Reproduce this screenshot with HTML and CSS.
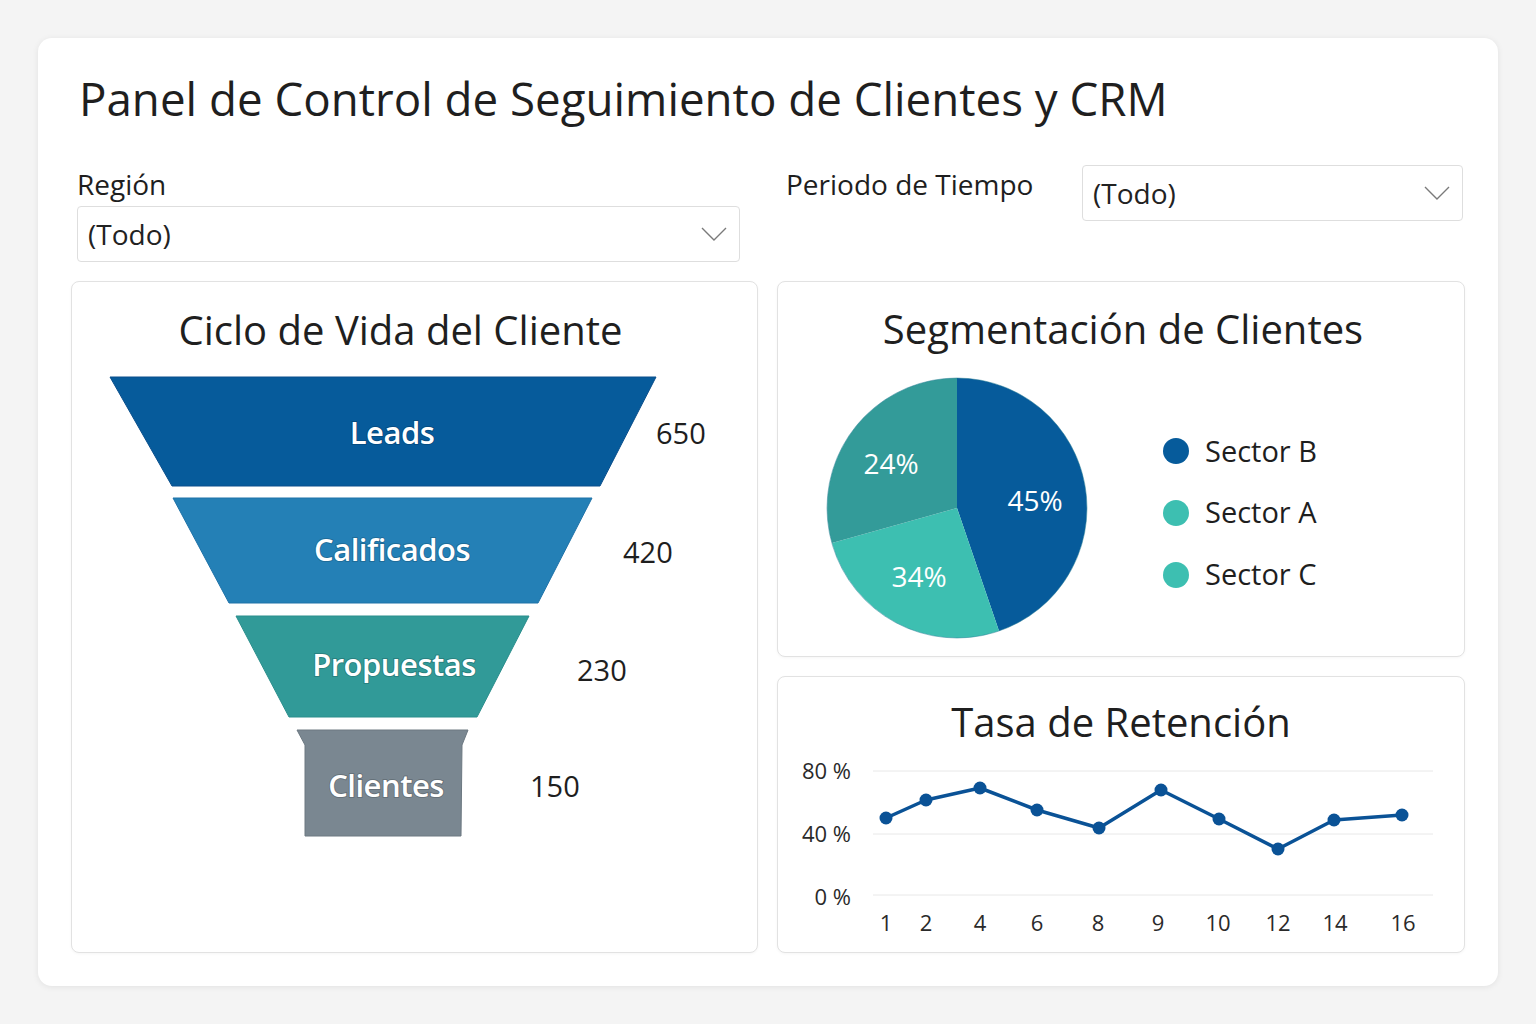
FILE: index.html
```html
<!DOCTYPE html>
<html lang="es">
<head>
<meta charset="utf-8">
<title>Panel de Control de Seguimiento de Clientes y CRM</title>
<link rel="stylesheet" href="styles.css">
</head>
<body>
<main class="dashboard">
  <h1 class="page-title">Panel de Control de Seguimiento de Clientes y CRM</h1>

  <section class="filters">
    <div class="filter filter-region">
      <label class="filter-label">Región</label>
      <div class="select select-wide">
        <span class="select-value">(Todo)</span>
        <svg class="chevron" viewBox="0 0 26 14" width="26" height="14"><path d="M1 1 L13 13 L25 1" fill="none" stroke="#7a7a7a" stroke-width="1.4"/></svg>
      </div>
    </div>
    <div class="filter filter-period">
      <label class="filter-label">Periodo de Tiempo</label>
      <div class="select select-narrow">
        <span class="select-value">(Todo)</span>
        <svg class="chevron" viewBox="0 0 26 14" width="26" height="14"><path d="M1 1 L13 13 L25 1" fill="none" stroke="#7a7a7a" stroke-width="1.4"/></svg>
      </div>
    </div>
  </section>

  <section class="cards">
    <article class="card card-funnel">
      <h2 class="card-title funnel-title">Ciclo de Vida del Cliente</h2>
      <svg class="funnel-svg" viewBox="72 370 685 560" width="685" height="560">
        <path d="M110,377 L656,377 L600,486 L172,486 Z" fill="#065b9b" stroke="#0a4f8c" stroke-width="1"/>
        <path d="M173,498 L592,498 L538,603 L229,603 Z" fill="#2480b6" stroke="#1f72a8" stroke-width="1"/>
        <path d="M236,616 L529,616 L477,717 L289,717 Z" fill="#319a98" stroke="#2b8e8c" stroke-width="1"/>
        <path d="M297,730 L468,730 L462,745 L461,836 L305,836 L305,745 Z" fill="#7a8791" stroke="#6c7881" stroke-width="1"/>
        <text class="funnel-label" x="392" y="432">Leads</text>
        <text class="funnel-label" x="392" y="549">Calificados</text>
        <text class="funnel-label" x="394" y="664">Propuestas</text>
        <text class="funnel-label" x="386" y="785">Clientes</text>
        <text class="funnel-value" x="656" y="432">650</text>
        <text class="funnel-value" x="623" y="551">420</text>
        <text class="funnel-value" x="577" y="669">230</text>
        <text class="funnel-value" x="530" y="785">150</text>
      </svg>
    </article>

    <div class="right-col">
      <article class="card card-pie">
        <h2 class="card-title pie-title">Segmentación de Clientes</h2>
        <svg class="pie-svg" viewBox="778 362 686 290" width="686" height="290">
          <path d="M957,507 L957,377 A130,130 0 0 1 999,630 Z" fill="#065b9b"/>
          <path d="M957,507 L999,630 A130,130 0 0 1 832,542 Z" fill="#3dbfb1"/>
          <path d="M957,507 L832,542 A130,130 0 0 1 957,377 Z" fill="#339b99"/>
          <circle cx="957" cy="507" r="130" fill="none" stroke="#2a7f95" stroke-width="1" opacity="0.5"/>
          <text class="pie-pct" x="1035" y="499">45%</text>
          <text class="pie-pct" x="891" y="462">24%</text>
          <text class="pie-pct" x="919" y="575">34%</text>
          <circle cx="1176" cy="450" r="13" fill="#065b9b"/>
          <circle cx="1176" cy="512" r="13" fill="#3dbfb1"/>
          <circle cx="1176" cy="574" r="13" fill="#3dbfb1"/>
          <text class="legend-text" x="1205" y="449">Sector B</text>
          <text class="legend-text" x="1205" y="510">Sector A</text>
          <text class="legend-text" x="1205" y="572">Sector C</text>
        </svg>
      </article>

      <article class="card card-line">
        <h2 class="card-title line-title">Tasa de Retención</h2>
        <svg class="line-svg" viewBox="778 750 686 200" width="686" height="200">
          <line x1="873" y1="771" x2="1433" y2="771" class="grid"/>
          <line x1="873" y1="834" x2="1433" y2="834" class="grid"/>
          <line x1="873" y1="895" x2="1433" y2="895" class="grid"/>
          <text class="axis-y" x="851" y="770">80 %</text>
          <text class="axis-y" x="851" y="833">40 %</text>
          <text class="axis-y" x="851" y="896">0 %</text>
          <text class="axis-x" x="886" y="922">1</text>
          <text class="axis-x" x="926" y="922">2</text>
          <text class="axis-x" x="980" y="922">4</text>
          <text class="axis-x" x="1037" y="922">6</text>
          <text class="axis-x" x="1098" y="922">8</text>
          <text class="axis-x" x="1158" y="922">9</text>
          <text class="axis-x" x="1218" y="922">10</text>
          <text class="axis-x" x="1278" y="922">12</text>
          <text class="axis-x" x="1335" y="922">14</text>
          <text class="axis-x" x="1403" y="922">16</text>
          <polyline class="series" points="886,818 926,800 980,788 1037,810 1099,828 1161,790 1219,819 1278,849 1334,820 1402,815"/>
          <g class="markers">
            <circle cx="886" cy="818" r="6.5"/>
            <circle cx="926" cy="800" r="6.5"/>
            <circle cx="980" cy="788" r="6.5"/>
            <circle cx="1037" cy="810" r="6.5"/>
            <circle cx="1099" cy="828" r="6.5"/>
            <circle cx="1161" cy="790" r="6.5"/>
            <circle cx="1219" cy="819" r="6.5"/>
            <circle cx="1278" cy="849" r="6.5"/>
            <circle cx="1334" cy="820" r="6.5"/>
            <circle cx="1402" cy="815" r="6.5"/>
          </g>
        </svg>
      </article>
    </div>
  </section>
</main>
</body>
</html>
```

FILE: styles.css
```css
* { box-sizing: border-box; }

html, body {
  margin: 0;
  padding: 0;
}

body {
  background: #f4f4f4;
  font-family: "Open Sans", "Noto Sans", "Liberation Sans", sans-serif;
  color: #222;
  width: 1536px;
  height: 1024px;
  overflow: hidden;
}

.dashboard {
  margin: 38px 0 0 38px;
  width: 1460px;
  height: 948px;
  background: #fff;
  border-radius: 14px;
  box-shadow: 0 1px 6px rgba(0, 0, 0, 0.08);
  padding: 30px 33px 33px 33px;
}

.page-title {
  margin: 0 0 0 8px;
  font-size: 45.7px;
  font-weight: 500;
  line-height: 60px;
  color: #1f1f1f;
  letter-spacing: 0;
}

.filters {
  display: flex;
  margin-top: 41px;
  margin-bottom: 19px;
  padding-left: 6px;
  height: 93px;
}

.filter-region {
  width: 663px;
  display: flex;
  flex-direction: column;
}

.filter-period {
  margin-left: 46px;
  display: flex;
  align-items: flex-start;
}

.filter-label {
  font-size: 28px;
  font-weight: 500;
  line-height: 30px;
  color: #1e1e1e;
}

.filter-period .filter-label {
  width: 296px;
}

.select {
  height: 56px;
  border: 1px solid #dedede;
  border-radius: 4px;
  background: #fff;
  display: flex;
  align-items: center;
  justify-content: space-between;
  padding: 0 12px 0 10px;
}

.select-wide {
  margin-top: 7px;
  width: 663px;
}

.select-narrow {
  margin-top: -4px;
  width: 381px;
}

.select-value {
  font-size: 28px;
  color: #222;
  line-height: 1;
}

.chevron {
  display: block;
}

.cards {
  display: flex;
  gap: 19px;
}

.card {
  background: #fff;
  border: 1px solid #e2e2e2;
  border-radius: 8px;
  box-shadow: 0 1px 3px rgba(0, 0, 0, 0.04);
}

.card-funnel {
  width: 687px;
  height: 672px;
}

.right-col {
  width: 688px;
  display: flex;
  flex-direction: column;
  gap: 19px;
}

.card-pie {
  height: 376px;
}

.card-line {
  height: 277px;
}

.card-title {
  margin: 0;
  text-align: center;
  font-size: 40px;
  font-weight: 500;
  line-height: 50px;
  color: #1f1f1f;
}

.funnel-title {
  margin-top: 23px;
  margin-bottom: 15px;
  padding-right: 28px;
}

.pie-title {
  margin-top: 22px;
  margin-bottom: 9px;
  padding-left: 4px;
}

.line-title {
  margin-top: 20px;
  margin-bottom: 3px;
}

svg { display: block; }

.funnel-label {
  font-family: "Open Sans", "Noto Sans", sans-serif;
  font-size: 31px;
  font-weight: 600;
  fill: #ffffff;
  text-anchor: middle;
  dominant-baseline: central;
  letter-spacing: -0.5px;
  paint-order: stroke;
  stroke: rgba(0, 0, 0, 0.18);
  stroke-width: 2px;
}

.funnel-value {
  font-family: "Open Sans", "Noto Sans", sans-serif;
  font-size: 29px;
  fill: #1e1e1e;
  dominant-baseline: central;
}

.pie-pct {
  font-family: "Open Sans", "Noto Sans", sans-serif;
  font-size: 28px;
  fill: #ffffff;
  text-anchor: middle;
  dominant-baseline: central;
}

.legend-text {
  font-family: "Open Sans", "Noto Sans", sans-serif;
  font-size: 29px;
  fill: #1e1e1e;
  dominant-baseline: central;
}

.grid {
  stroke: #e8e8e8;
  stroke-width: 1;
}

.axis-y {
  font-family: "Open Sans", "Noto Sans", sans-serif;
  font-size: 22px;
  fill: #2a2a2a;
  text-anchor: end;
  dominant-baseline: central;
}

.axis-x {
  font-family: "Open Sans", "Noto Sans", sans-serif;
  font-size: 22px;
  fill: #2a2a2a;
  text-anchor: middle;
  dominant-baseline: central;
}

.series {
  fill: none;
  stroke: #0a5296;
  stroke-width: 3.5;
  stroke-linejoin: round;
}

.markers circle {
  fill: #0a5296;
}
```
